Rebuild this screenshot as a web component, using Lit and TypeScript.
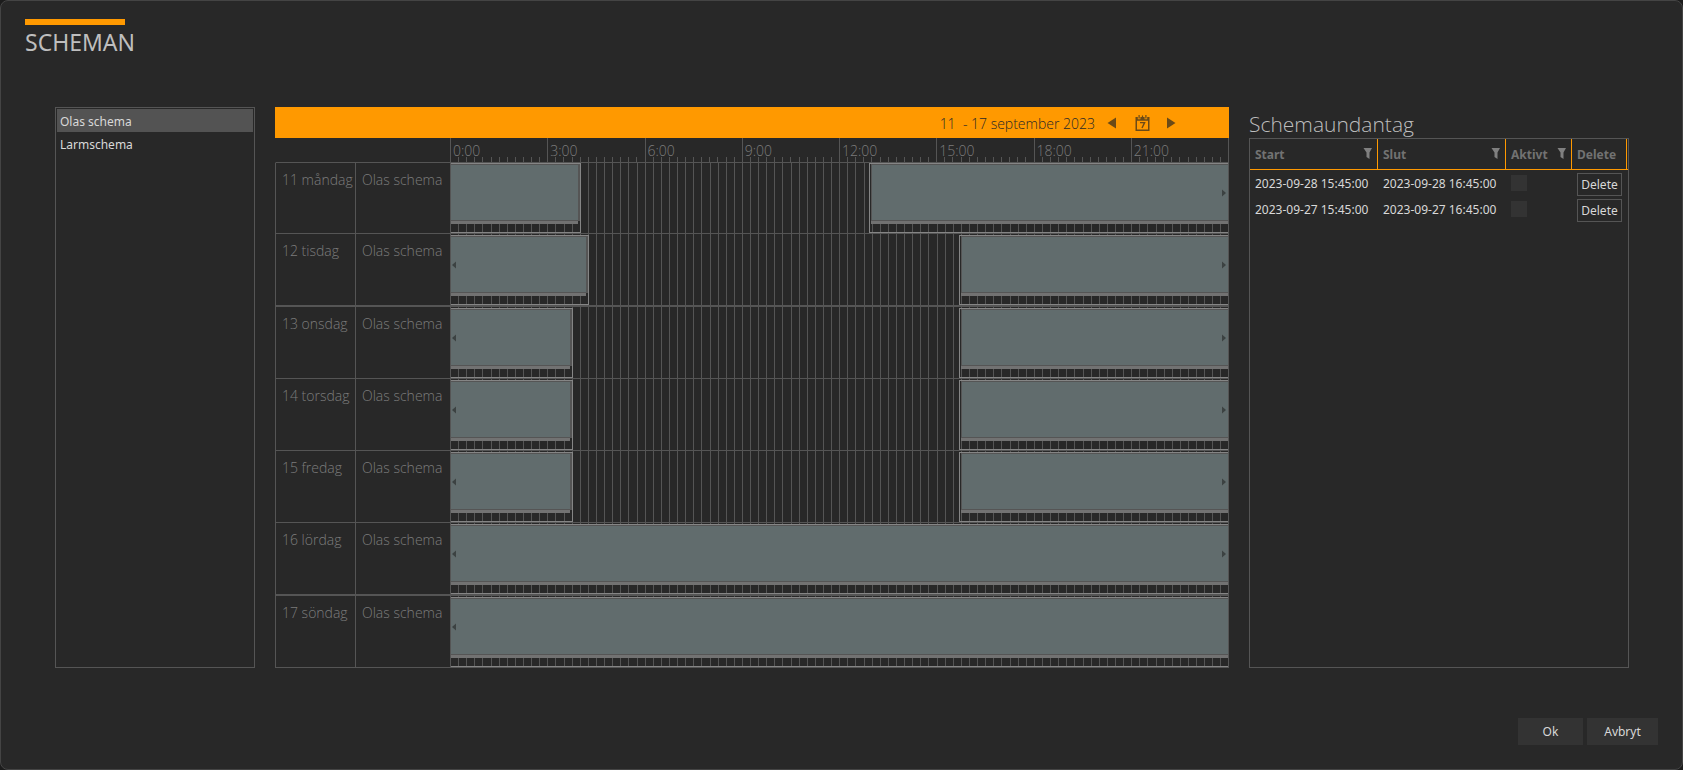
import { LitElement, html, css, svg } from "lit";
import { customElement, property, state } from "lit/decorators.js";
import { styleMap } from "lit/directives/style-map.js";
import { classMap } from "lit/directives/class-map.js";

interface Slot {
  from: number;
  to: number;
  before?: boolean;
  after?: boolean;
}

interface Day {
  label: string;
  slots: Slot[];
  tight?: boolean;
  thick?: boolean;
}

const QUARTERS = 96;
const late = { from: 63, to: 96, after: true };

const DAYS: Day[] = [
  { label: "11 måndag", tight: true, slots: [{ from: 0, to: 16 }, { from: 52, to: 96, after: true }] },
  { label: "12 tisdag", thick: true, slots: [{ from: 0, to: 17, before: true }, late] },
  { label: "13 onsdag", slots: [{ from: 0, to: 15, before: true }, late] },
  { label: "14 torsdag", slots: [{ from: 0, to: 15, before: true }, late] },
  { label: "15 fredag", slots: [{ from: 0, to: 15, before: true }, late] },
  { label: "16 lördag", thick: true, slots: [{ from: 0, to: 96, before: true, after: true }] },
  { label: "17 söndag", slots: [{ from: 0, to: 96, before: true }] },
];

const HOURS = ["0:00", "3:00", "6:00", "9:00", "12:00", "15:00", "18:00", "21:00"];

const EXCEPTIONS = [
  { start: "2023-09-28 15:45:00", end: "2023-09-28 16:45:00" },
  { start: "2023-09-27 15:45:00", end: "2023-09-27 16:45:00" },
];

const cells = (n: number) => Array.from({ length: n }, () => html`<i></i>`);

@customElement("schedule-week")
class ScheduleWeek extends LitElement {
  @property() name = "Olas schema";

  static styles = css`
    :host {
      display: block;
      color: #7c7c7c;
      font: 300 14px/20px "Open Sans", "Noto Sans", sans-serif;
    }
    .bar {
      display: flex;
      align-items: center;
      justify-content: flex-end;
      height: 31px;
      padding-right: 52px;
      background: #ff9900;
      color: #282828;
    }
    .range {
      margin-right: 12px;
      padding-top: 2px;
      white-space: pre;
    }
    .nav {
      display: flex;
      padding: 0;
      border: 0;
      background: none;
      cursor: pointer;
    }
    .nav.cal {
      margin: 0 16px 0 18px;
    }
    .row {
      display: grid;
      grid-template-columns: 80px 94px 1fr;
      border-left: 1px solid #555;
      border-bottom: 1px solid #555;
    }
    .row.thick {
      border-bottom-width: 2px;
    }
    .row.head {
      border-left-color: transparent;
    }
    .cell {
      padding: 7px 6px;
      white-space: nowrap;
    }
    .cell.day {
      border-right: 1px solid #555;
    }
    .head .cell {
      padding: 0;
    }
    .track {
      position: relative;
      display: flex;
      height: 71px;
      border-right: 1px solid #555;
    }
    .tight .track {
      height: 70px;
    }
    .ticks {
      display: flex;
      flex: 1;
    }
    .ticks i {
      flex: 1 1 0;
      min-width: 0;
      border-left: 1px solid #555;
      box-sizing: border-box;
    }
    .scale {
      display: grid;
      grid-template-columns: repeat(8, 1fr);
      border-right: 1px solid #555;
    }
    .hour {
      position: relative;
      height: 24px;
      border-left: 1px solid #555;
      box-sizing: border-box;
    }
    .hour .ticks {
      position: absolute;
      inset: 19px 0 0 -1px;
    }
    .hour span {
      position: absolute;
      left: 2px;
      top: 3px;
    }
    .slot {
      position: absolute;
      bottom: 0;
      height: 70px;
      box-sizing: border-box;
      border: 1px solid #858585;
    }
    .slot.start {
      margin-left: 1px;
      border-left: 0;
    }
    .slot.end {
      border-right: 0;
    }
    .slot.inset {
      margin-left: -2px;
      padding-left: 1px;
    }
    .slot.early {
      margin-right: -1px;
    }
    .fill {
      display: flex;
      align-items: center;
      justify-content: space-between;
      height: 57px;
      box-sizing: border-box;
      border: 1px solid #555;
      background: #616c6d;
      padding: 0 2px 0 1px;
    }
    .start .fill {
      border-left: 0;
    }
    .early .fill {
      border-right-width: 2px;
    }
    .end .fill {
      border-right: 0;
    }
    .shade {
      height: 3px;
      background: #727272;
    }
    .early .shade {
      margin-right: 2px;
    }
  `;

  private slotTpl(s: Slot) {
    const start = s.from === 0;
    const end = s.to === QUARTERS;
    const pos = {
      left: `${(s.from / QUARTERS) * 100}%`,
      right: `${100 - (s.to / QUARTERS) * 100}%`,
    };
    return html`<div
      class=${classMap({ slot: true, start, end, inset: !start, early: !end })}
      style=${styleMap(pos)}
    >
      <div class="fill">
        <svg width="4" height="8">${s.before ? svg`<path d="M4 0.5v7L0 4z" fill="#3c4242" />` : ""}</svg>
        <svg width="4" height="8">${s.after ? svg`<path d="M0 0.5v7L4 4z" fill="#3c4242" />` : ""}</svg>
      </div>
      <div class="shade"></div>
    </div>`;
  }

  render() {
    return html`
      <div class="bar">
        <span class="range">11  - 17 september 2023</span>
        <button class="nav" aria-label="Föregående vecka">
          <svg width="10" height="12"><path d="M9 0.5v11L0.500 6z" fill="#6b4a17" /></svg>
        </button>
        <button class="nav cal" aria-label="Välj datum">
          <svg width="16" height="18" viewBox="0 0 16 18">
            <path
              d="M0.500 3H2.800v2.200h2.600V3h4.200v2.200h2.600V3h2.300v14H0.500zM2 6.800v8.700h11V6.800z"
              fill="#6b4a17"
              fill-rule="evenodd"
            />
            <path d="M3.500 1h1.200v3.400H3.500zM6.900 1.500h1.200V3H6.900zM10.300 1h1.200v3.400h-1.200z" fill="#6b4a17" />
            <path d="M5 8.600h4.600L7 14" fill="none" stroke="#6b4a17" stroke-width="1.400" />
          </svg>
        </button>
        <button class="nav" aria-label="Nästa vecka">
          <svg width="10" height="12"><path d="M0 0.500v11L8.500 6z" fill="#6b4a17" /></svg>
        </button>
      </div>
      <div class="row head">
        <div class="cell"></div>
        <div class="cell"></div>
        <div class="scale">
          ${HOURS.map((h) => html`<div class="hour"><div class="ticks">${cells(12)}</div><span>${h}</span></div>`)}
        </div>
      </div>
      ${DAYS.map(
        (d) => html`<div class=${classMap({ row: true, tight: !!d.tight, thick: !!d.thick })}>
          <div class="cell day">${d.label}</div>
          <div class="cell">${this.name}</div>
          <div class="track">
            <div class="ticks">${cells(QUARTERS)}</div>
            ${d.slots.map((s) => this.slotTpl(s))}
          </div>
        </div>`,
      )}
    `;
  }
}

@customElement("app-root")
class AppRoot extends LitElement {
  @state() private selected = "Olas schema";

  static styles = css`
    :host {
      display: block;
      background: #1c1c1c;
      color: #d8d8d8;
      font: 12px/18px "Noto Sans", sans-serif;
    }
    .dialog {
      display: flex;
      flex-direction: column;
      box-sizing: border-box;
      min-height: 100vh;
      padding: 18px 24px 24px;
      border: 1px solid #444;
      border-radius: 8px;
      background: #282828;
    }
    h1 {
      align-self: flex-start;
      width: 100px;
      margin: 0;
      border-top: 6px solid #ff9900;
      color: #bebebe;
      font-weight: 400;
      font-size: 23px;
      line-height: 34px;
      white-space: nowrap;
    }
    .body {
      display: grid;
      grid-template-columns: 200px 1fr 380px;
      gap: 20px;
      margin: 48px 29px 0 30px;
    }
    .list {
      display: flex;
      flex-direction: column;
      border: 1px solid #555;
      padding: 1px;
    }
    .item {
      height: 23px;
      padding: 2px 3px 0;
      border: 0;
      background: none;
      color: inherit;
      font: inherit;
      text-align: left;
      cursor: pointer;
    }
    .item.on {
      background: #535353;
    }
    .side {
      display: flex;
      flex-direction: column;
    }
    h2 {
      margin: 0;
      padding-top: 3px;
      color: #bebebe;
      font: 300 21px/28px "Open Sans", "Noto Sans", sans-serif;
    }
    .panel {
      flex: 1;
      border: 1px solid #555;
    }
    table {
      width: 100%;
      border-collapse: separate;
      border-spacing: 0;
      table-layout: fixed;
    }
    th,
    td {
      box-sizing: border-box;
      padding: 0 5px;
      text-align: left;
      white-space: nowrap;
    }
    th {
      height: 31px;
      border-right: 1px solid #ff9900;
      border-bottom: 1px solid #ff9900;
      color: #727272;
      font-weight: 700;
    }
    th.rest {
      border-right: 0;
      padding: 0;
    }
    td {
      height: 26px;
    }
    td.date,
    .label {
      padding-top: 2px;
    }
    .th {
      display: flex;
      align-items: center;
      justify-content: space-between;
    }
    .c1,
    .c2 {
      width: 128px;
    }
    .c3 {
      width: 66px;
    }
    .c4 {
      width: 55px;
    }
    .check {
      display: block;
      appearance: none;
      width: 16px;
      height: 16px;
      margin: 0;
      background: #333;
    }
    .del {
      display: block;
      width: 45px;
      height: 23px;
      margin-top: 2px;
      padding: 2px 0 0;
      border: 1px solid #555;
      background: none;
      color: inherit;
      font: inherit;
      cursor: pointer;
    }
    .actions {
      display: flex;
      justify-content: flex-end;
      gap: 4px;
      margin-top: auto;
    }
    .action {
      height: 27px;
      width: 65px;
      border: 0;
      background: #333;
      color: inherit;
      font: inherit;
      cursor: pointer;
    }
    .action.wide {
      width: 71px;
    }
  `;

  private head(label: string, cls: string, filter = true) {
    return html`<th class=${cls} scope="col">
      <div class="th">
        <span class="label">${label}</span>
        ${filter ? html`<svg width="9" height="12"><path d="M0.500 0H9L6.500 4.500V11L3.500 9V4.500z" fill="#808080" /></svg>` : ""}
      </div>
    </th>`;
  }

  render() {
    return html`<main class="dialog">
      <h1>SCHEMAN</h1>
      <div class="body">
        <nav class="list" aria-label="Scheman">
          ${["Olas schema", "Larmschema"].map(
            (n) => html`<button
              class=${classMap({ item: true, on: n === this.selected })}
              @click=${() => (this.selected = n)}
            >${n}</button>`,
          )}
        </nav>
        <schedule-week></schedule-week>
        <section class="side">
          <h2>Schemaundantag</h2>
          <div class="panel">
            <table>
              <thead>
                <tr>
                  ${this.head("Start", "c1")} ${this.head("Slut", "c2")} ${this.head("Aktivt", "c3")}
                  ${this.head("Delete", "c4", false)}
                  <th class="rest"></th>
                </tr>
              </thead>
              <tbody>
                ${EXCEPTIONS.map(
                  (e) => html`<tr>
                    <td class="date">${e.start}</td>
                    <td class="date">${e.end}</td>
                    <td><input class="check" type="checkbox" aria-label="Aktivt" /></td>
                    <td><button class="del">Delete</button></td>
                  </tr>`,
                )}
              </tbody>
            </table>
          </div>
        </section>
      </div>
      <div class="actions">
        <button class="action">Ok</button>
        <button class="action wide">Avbryt</button>
      </div>
    </main>`;
  }
}
